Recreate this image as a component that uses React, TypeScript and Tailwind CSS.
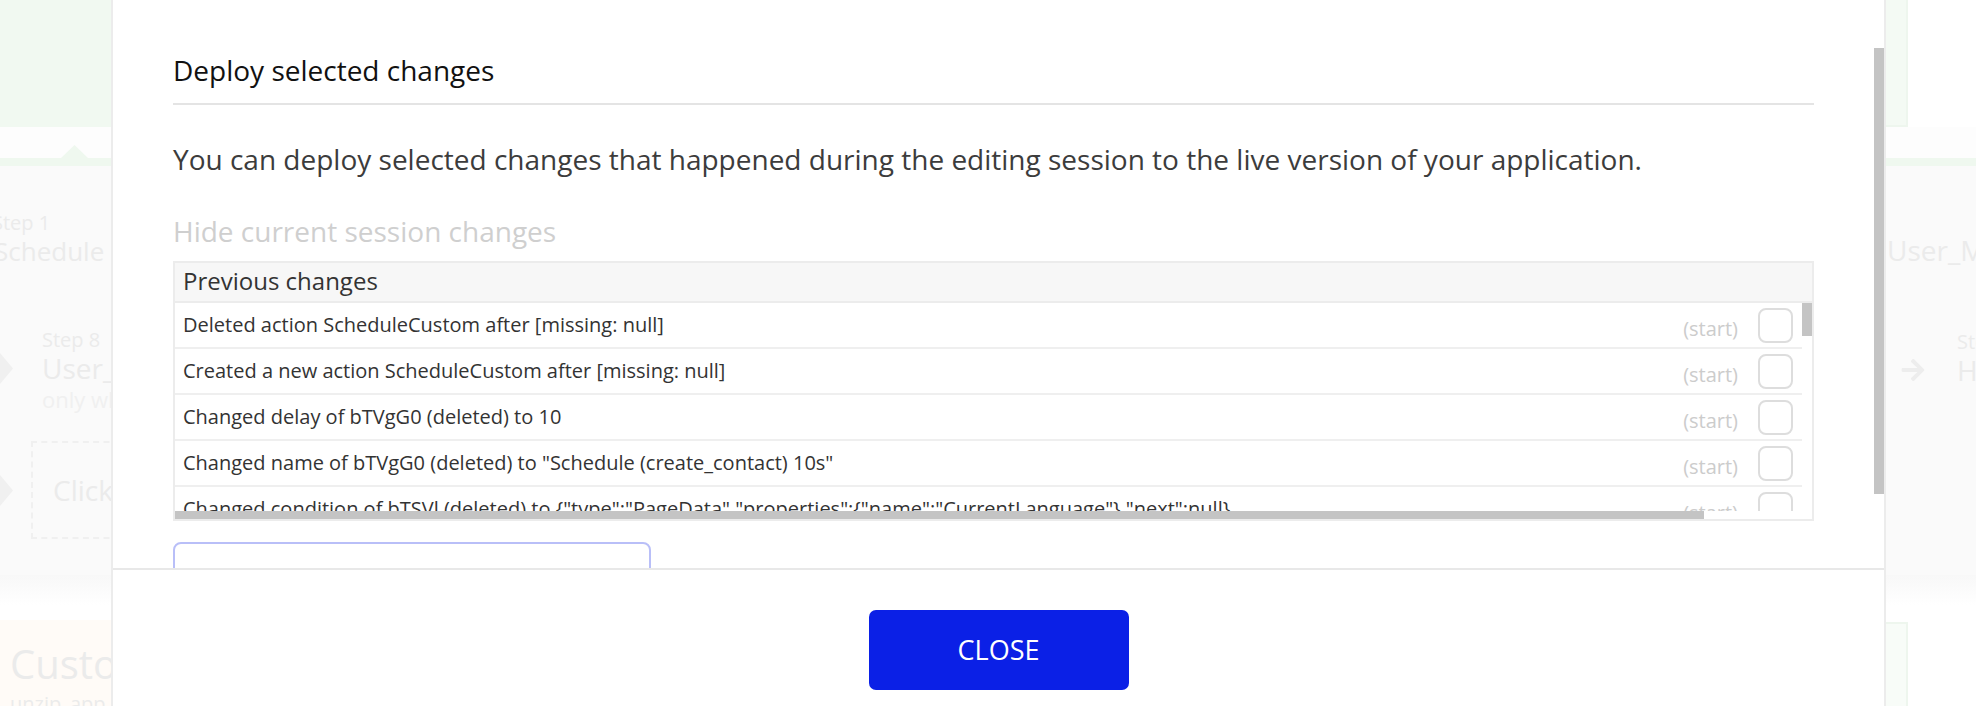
import { FaArrowRight } from 'react-icons/fa';

const changes = [
  'Deleted action ScheduleCustom after [missing: null]',
  'Created a new action ScheduleCustom after [missing: null]',
  'Changed delay of bTVgG0 (deleted) to 10',
  'Changed name of bTVgG0 (deleted) to "Schedule (create_contact) 10s"',
  'Changed condition of bTSVl (deleted) to {"type":"PageData","properties":{"name":"CurrentLanguage"},"next":null}',
];

function Chevron() {
  return (
    <svg width="13" height="31" viewBox="0 0 13 31">
      <polygon points="0,0 13,15.5 0,31" fill="#f0f0f0" />
    </svg>
  );
}

function LeftBackdrop() {
  return (
    <div className="flex w-[111px] shrink-0 flex-col overflow-hidden">
      <div className="h-[127px] shrink-0 bg-[#f1f9f1]" />
      <div className="flex h-[31px] shrink-0 items-end bg-[#fdfdfd] pl-[61px]">
        <svg width="27" height="13" viewBox="0 0 27 13">
          <polygon points="0,13 13.5,0 27,13" fill="#eff8ef" />
        </svg>
      </div>
      <div className="h-[8px] shrink-0 bg-[#eff8ef]" />

      {/* faded workflow behind the modal */}
      <div className="flex h-[409px] shrink-0 flex-col bg-[#fafafa] pt-[45px] whitespace-nowrap text-[#ebebeb]">
        <div className="-ml-[8px] text-[20px] leading-[24px]">Step 1</div>
        <div className="-ml-[6px] text-[26px] leading-[32px]">Schedule (create_contact)</div>

        <div className="mt-[61px] flex">
          <div className="w-[42px] shrink-0 pt-[25px]">
            <Chevron />
          </div>
          <div className="flex flex-col">
            <div className="text-[20px] leading-[24px]">Step 8</div>
            <div className="text-[28px] leading-[32px]">User_Management</div>
            <div className="text-[22px] leading-[30px] text-[#f0f0f0]">only when</div>
          </div>
        </div>

        <div className="mt-[27px] flex items-center">
          <div className="w-[31px] shrink-0">
            <Chevron />
          </div>
          <div className="flex h-[98px] w-[120px] shrink-0 items-center border-2 border-dashed border-[#f0f0f0] pl-[20px] text-[28px]">
            Click here
          </div>
        </div>
      </div>
      <div className="h-[30px] shrink-0 bg-gradient-to-b from-[#f8f8f8] to-white" />
      <div className="h-[15px] shrink-0 bg-white" />
      <div className="min-h-0 flex-1 overflow-hidden bg-[#fffbf7] pl-[10px] pt-[20px] whitespace-nowrap text-[#ebebeb]">
        <div className="text-[40px] leading-[48px]">Custom events</div>
        <div className="mt-[4px] text-[20px] leading-[24px]">unzip_app</div>
      </div>
    </div>
  );
}

function RightBackdrop() {
  return (
    <div className="flex min-w-0 flex-1 flex-col overflow-hidden">
      <div className="h-[127px] shrink-0">
        <div className="h-full w-[22px] border-r-2 border-b-2 border-[#eef6ee] bg-[#f4faf4]" />
      </div>
      <div className="h-[31px] shrink-0 bg-[#fdfdfd]" />
      <div className="h-[8px] shrink-0 bg-[#eff8ef]" />
      <div className="flex h-[409px] shrink-0 flex-col bg-[#fafafa] pt-[68px] whitespace-nowrap text-[#ebebeb]">
        <div className="pl-[1px] text-[28px] leading-[32px]">User_Management</div>
        <div className="mt-[64px] flex">
          <div className="w-[71px] shrink-0 pl-[14px] pt-[27px]">
            <FaArrowRight className="h-[26px] w-[26px] text-[#ededed]" />
          </div>
          <div className="flex flex-col">
            <div className="text-[20px] leading-[24px]">Step 9</div>
            <div className="text-[28px] leading-[32px]">Hide</div>
          </div>
        </div>
      </div>
      <div className="h-[30px] shrink-0 bg-gradient-to-b from-[#f8f8f8] to-white" />
      <div className="min-h-0 flex-1 bg-white pt-[17px]">
        <div className="h-full w-[22px] border-r-2 border-t-2 border-[#eef6ee] bg-[#f8fcf8]" />
      </div>
    </div>
  );
}

function ChangeRow({ text }: { text: string }) {
  return (
    <div className="flex h-[46px] shrink-0 items-center border-b-2 border-[#efefef] pl-[8px]">
      <div className="min-w-0 flex-1 overflow-hidden whitespace-nowrap text-[20px] text-[#333333]">
        {text}
      </div>
      <div className="pt-[7px] text-[20px] text-[#cccccc]">(start)</div>
      <div className="ml-[20px] mr-[9px] h-[35px] w-[35px] shrink-0 rounded-[8px] border-2 border-[#dddddd] bg-white" />
    </div>
  );
}

function DeployModal() {
  return (
    <div className="flex w-[1775px] shrink-0 flex-col border-x-2 border-[#ececec] bg-white">
      {/* scrollable body */}
      <div className="flex h-[568px] shrink-0 overflow-hidden">
        <div className="min-w-0 flex-1 px-[60px]">
          <h2 className="border-b-2 border-[#e4e4e4] pt-[51px] pb-[14px] text-[28px] leading-[38px] text-[#111111]">
            Deploy selected changes
          </h2>
          <p className="mt-[35px] text-[28px] leading-[38px] text-[#3c3c3c]">
            You can deploy selected changes that happened during the editing session to the live version of your application.
          </p>
          <div className="mt-[34px] text-[28px] leading-[38px] text-[#cfcfcf]">Hide current session changes</div>

          <div className="mt-[11px] border-2 border-[#ececec]">
            <div className="h-[40px] border-b-2 border-[#ececec] bg-[#f7f7f7] pl-[8px] text-[24px] leading-[36px] text-[#333333]">
              Previous changes
            </div>
            <div className="flex h-[208px] overflow-hidden">
              <div className="flex min-w-0 flex-1 flex-col">
                {changes.map((c, i) => (
                  <ChangeRow key={i} text={c} />
                ))}
              </div>
              <div className="w-[10px] shrink-0">
                <div className="h-[33px] bg-[#c4c4c4]" />
              </div>
            </div>
            <div className="h-[8px]">
              <div className="h-full w-[1529px] bg-[#c4c4c4]" />
            </div>
          </div>

          <div className="mt-[21px] h-[50px] w-[478px] rounded-[8px] border-2 border-[#b9bff8]" />
        </div>
        <div className="w-[10px] shrink-0 pt-[48px]">
          <div className="h-[446px] bg-[#c4c4c4]" />
        </div>
      </div>

      {/* footer */}
      <div className="flex flex-1 justify-center border-t-2 border-[#e8e8e8] pt-[40px]">
        <button className="h-[80px] w-[260px] rounded-[7px] bg-[#0b20e6] text-[27px] text-white">
          CLOSE
        </button>
      </div>
    </div>
  );
}

export default function App() {
  return (
    <div className="flex h-[706px] w-[1976px] overflow-hidden bg-white font-['Open_Sans',sans-serif]">
      <LeftBackdrop />
      <DeployModal />
      <RightBackdrop />
    </div>
  );
}
